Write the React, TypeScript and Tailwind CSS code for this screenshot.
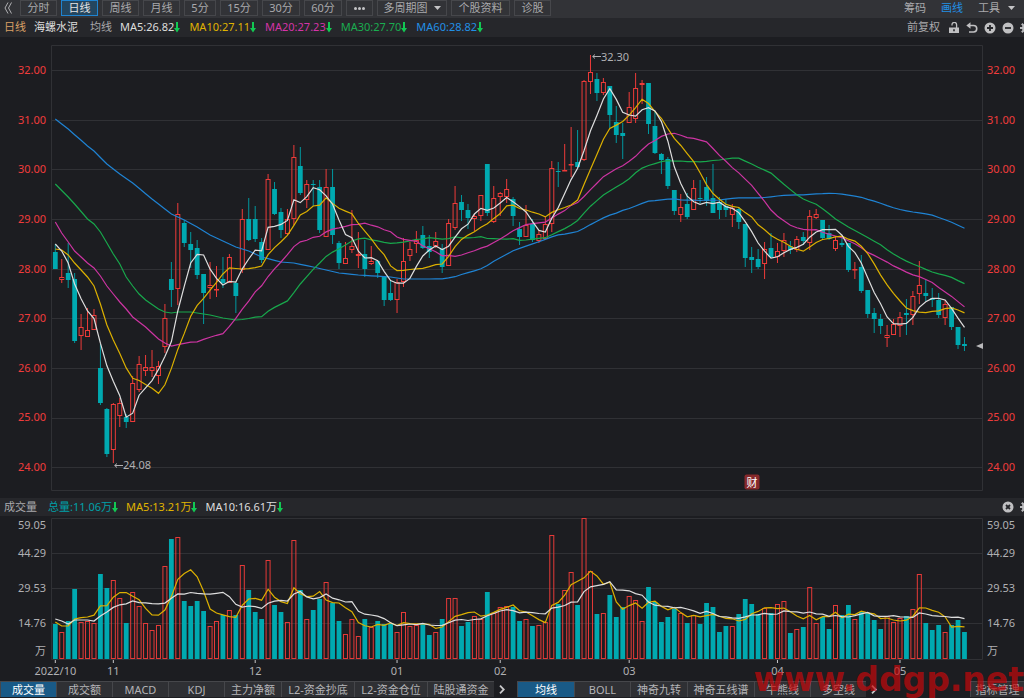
import { clsx } from 'clsx'

// [up, body top, body bottom, high, low, volume top], all in chart units
type Bar = [number, number, number, number, number, number]

const bars: Bar[] = [
  [0, 252, 269, 244, 269, 624], [1, 277, 280, 259, 283, 632], [0, 273, 280, 243, 288, 621],
  [0, 279, 341, 273, 343, 589], [1, 327, 336, 314, 350, 622], [1, 330, 337, 308, 337, 621],
  [1, 315, 330, 309, 330, 623], [0, 368, 403, 344, 405, 574], [0, 409, 454, 408, 457, 588],
  [1, 404, 450, 403, 463, 580], [1, 403, 416, 398, 427, 598], [0, 417, 422, 414, 428, 623],
  [1, 383, 422, 376, 422, 592], [1, 364, 390, 356, 392, 606], [1, 367, 371, 355, 376, 623],
  [1, 367, 371, 350, 377, 630], [1, 366, 376, 361, 384, 625], [1, 318, 347, 304, 353, 566],
  [0, 279, 290, 262, 307, 539], [1, 214, 289, 203, 305, 537], [0, 223, 243, 220, 247, 601],
  [0, 244, 250, 232, 268, 606], [0, 248, 275, 240, 279, 601], [0, 274, 293, 274, 324, 611],
  [1, 285, 288, 262, 299, 626], [1, 289, 290, 266, 297, 621], [0, 279, 283, 257, 288, 615],
  [1, 257, 283, 254, 283, 610], [0, 283, 296, 282, 313, 615], [1, 219, 270, 209, 273, 565],
  [0, 219, 240, 198, 241, 590], [0, 219, 239, 206, 242, 612], [0, 242, 260, 238, 263, 619],
  [1, 179, 250, 174, 250, 560], [0, 189, 214, 182, 215, 605], [0, 212, 230, 208, 238, 612],
  [1, 219, 234, 209, 235, 622], [1, 157, 219, 145, 225, 540], [0, 166, 193, 147, 195, 590],
  [1, 184, 200, 180, 208, 619], [0, 184, 185, 180, 206, 610], [0, 187, 230, 180, 233, 599],
  [1, 187, 237, 169, 237, 582], [0, 187, 235, 169, 244, 603], [0, 243, 263, 241, 269, 621],
  [1, 258, 264, 242, 264, 634], [1, 246, 250, 210, 253, 619], [1, 254, 256, 232, 268, 636],
  [0, 254, 269, 240, 277, 619], [1, 261, 264, 246, 265, 627], [0, 261, 273, 260, 278, 621],
  [0, 277, 300, 277, 306, 624], [0, 293, 300, 280, 301, 624], [1, 282, 300, 279, 313, 632],
  [1, 261, 282, 238, 287, 612], [1, 249, 256, 242, 261, 626], [1, 240, 244, 231, 253, 625],
  [0, 235, 248, 226, 249, 624], [0, 246, 252, 235, 258, 635], [1, 241, 246, 232, 248, 632],
  [0, 249, 267, 244, 273, 619], [1, 223, 266, 219, 266, 598], [1, 203, 228, 186, 230, 598],
  [0, 202, 210, 195, 221, 626], [0, 210, 218, 204, 229, 622], [1, 216, 219, 214, 231, 616],
  [1, 195, 216, 195, 221, 619], [0, 164, 213, 164, 216, 592], [1, 198, 222, 186, 223, 613],
  [1, 193, 197, 192, 216, 607], [1, 189, 197, 179, 203, 606], [0, 199, 216, 197, 226, 607],
  [0, 229, 237, 222, 245, 621], [1, 225, 237, 205, 237, 619], [0, 224, 240, 219, 242, 626],
  [1, 234, 241, 231, 243, 625], [1, 224, 239, 217, 239, 622], [1, 168, 224, 161, 232, 535],
  [0, 171, 172, 162, 187, 604], [1, 170, 171, 144, 171, 590], [1, 164, 165, 127, 177, 572],
  [0, 162, 167, 130, 168, 605], [1, 81, 160, 80, 161, 518], [1, 72, 82, 55, 94, 571],
  [0, 79, 93, 73, 101, 614], [1, 82, 93, 78, 95, 613], [0, 86, 115, 86, 128, 595],
  [0, 122, 135, 106, 143, 617], [0, 133, 136, 123, 159, 607], [1, 107, 123, 92, 123, 596],
  [1, 88, 119, 73, 123, 600], [1, 83, 85, 80, 104, 621], [0, 83, 124, 83, 134, 587],
  [0, 126, 153, 111, 154, 602], [0, 154, 160, 153, 174, 622], [0, 159, 186, 157, 189, 617],
  [0, 190, 211, 190, 215, 609], [1, 207, 215, 194, 222, 613], [0, 204, 217, 193, 219, 623],
  [1, 188, 210, 180, 210, 615], [0, 198, 199, 180, 203, 624], [0, 187, 201, 177, 206, 603],
  [0, 198, 213, 164, 213, 607], [0, 202, 210, 197, 219, 632], [0, 206, 210, 199, 217, 626],
  [1, 208, 215, 204, 227, 626], [0, 209, 222, 207, 229, 614], [0, 224, 258, 224, 267, 599],
  [0, 257, 260, 247, 273, 604], [0, 259, 267, 249, 269, 614], [1, 249, 264, 242, 279, 608],
  [0, 248, 257, 233, 258, 613], [1, 251, 257, 243, 263, 604], [1, 240, 251, 233, 257, 601],
  [0, 246, 250, 241, 254, 633], [1, 239, 250, 236, 252, 629], [0, 237, 241, 232, 245, 627],
  [1, 216, 243, 210, 250, 587], [1, 214, 218, 209, 219, 623], [0, 220, 238, 220, 239, 617],
  [0, 233, 239, 225, 240, 629], [1, 240, 249, 236, 251, 605], [0, 243, 245, 238, 247, 615],
  [0, 243, 270, 243, 272, 605], [1, 269, 270, 262, 279, 619], [0, 267, 291, 255, 293, 612],
  [0, 290, 314, 290, 318, 613], [0, 313, 319, 308, 333, 620], [0, 319, 326, 314, 334, 629],
  [1, 335, 338, 325, 347, 616], [1, 324, 335, 319, 335, 622], [1, 317, 326, 312, 337, 618],
  [0, 313, 315, 299, 335, 616], [1, 296, 315, 291, 325, 609], [1, 285, 294, 261, 304, 574],
  [0, 293, 296, 280, 301, 623], [0, 298, 300, 288, 307, 630], [0, 300, 315, 293, 318, 625],
  [1, 304, 318, 300, 325, 632], [0, 307, 327, 307, 330, 625], [0, 327, 345, 327, 349, 620],
  [0, 344, 346, 337, 351, 632],
]

const LEFT = 51
const WIDTH = 932
const PRICE_TOP = 37
const PRICE_HEIGHT = 461
const VOL_BASE = 659

const barX = (i: number) => 55.3 + i * 6.448
const percentX = (x: number) => `${((x - LEFT) / WIDTH) * 100}%`
const percentY = (y: number) => `${((y - PRICE_TOP) / PRICE_HEIGHT) * 100}%`

const closes = bars.map(([up, top, bottom]) => (up ? top : bottom))
const volumes = bars.map((b) => b[5])

// The window is not full at the start, so the first values come from seed points
function average(values: number[], size: number, seed: [number, number][]) {
  return values
    .map((_, i) => {
      let y: number
      if (i >= size - 1) {
        y = values.slice(i - size + 1, i + 1).reduce((a, b) => a + b, 0) / size
      } else {
        const k = seed.findIndex((s) => s[0] >= i)
        if (k < 0) return null
        const [x2, y2] = seed[k]
        const [x1, y1] = seed[Math.max(0, k - 1)]
        y = x2 === x1 ? y2 : y1 + ((y2 - y1) * (i - x1)) / (x2 - x1)
      }
      return `${barX(i).toFixed(1)},${y.toFixed(1)}`
    })
    .filter(Boolean)
    .join(' ')
}

const priceLines = [
  {
    color: '#1f83d3',
    points: average(closes, 60, [
      [0, 119], [2, 129], [5, 146], [6, 151], [8, 164], [10, 174], [12, 183], [15, 199], [17, 209],
      [18, 214], [19, 217], [20, 220], [22, 227], [24, 235], [26, 241], [28, 247], [30, 251],
      [32, 257], [35, 262], [37, 263], [40, 267], [42, 270], [44, 273], [47, 275], [52, 277],
      [54, 279], [59, 279],
    ]),
  },
  {
    color: '#18a84c',
    points: average(closes, 30, [
      [0, 184], [2, 197], [3, 204], [5, 219], [6, 224], [7, 232], [8, 243], [9, 254], [10, 264],
      [11, 277], [12, 286], [13, 294], [14, 300], [16, 309], [17, 312], [18, 313], [19, 312],
      [21, 312], [22, 313], [24, 315], [26, 318], [28, 320],
    ]),
  },
  {
    color: '#cc34a2',
    points: average(closes, 20, [
      [0, 222], [1, 233], [2, 242], [3, 251], [4, 257], [5, 263], [6, 268], [7, 276], [8, 286],
      [9, 294], [10, 302], [11, 309], [12, 317], [13, 322], [14, 327], [15, 333], [16, 339],
      [17, 343], [18, 346],
    ]),
  },
  {
    color: '#dcb000',
    points: average(closes, 10, [
      [0, 249], [1, 250], [2, 255], [3, 263], [4, 270], [5, 277], [6, 286], [7, 304], [8, 325],
    ]),
  },
  { color: '#dedede', points: average(closes, 5, [[0, 244], [1, 251], [2, 263], [3, 284]]) },
]

const volumeLines = [
  { color: '#dcb000', points: average(volumes, 5, [[0, 622], [1, 626], [2, 626], [3, 619]]) },
  {
    color: '#dedede',
    points: average(volumes, 10, [
      [0, 619], [1, 621], [2, 624], [3, 620], [5, 620], [6, 621], [7, 616], [8, 612],
    ]),
  },
]

const prices = ['32.00', '31.00', '30.00', '29.00', '28.00', '27.00', '26.00', '25.00', '24.00']

const months = [
  { at: 0, label: '2022/10' },
  { at: 9, label: '11' },
  { at: 31, label: '12' },
  { at: 53, label: '01' },
  { at: 69, label: '02' },
  { at: 89, label: '03' },
  { at: 112, label: '04' },
  { at: 131, label: '05' },
]

const periods = [
  { label: '分时', width: 'w-[37px]' },
  { label: '日线', width: 'w-[37px]', active: true },
  { label: '周线', width: 'w-[37px]' },
  { label: '月线', width: 'w-[37px]' },
  { label: '5分', width: 'w-8' },
  { label: '15分', width: 'w-[38px]' },
  { label: '30分', width: 'w-[38px]' },
  { label: '60分', width: 'w-[38px]' },
]

const averages = [
  { label: 'MA5:26.82', color: 'text-[#dedede]' },
  { label: 'MA10:27.11', color: 'text-[#e0b400]' },
  { label: 'MA20:27.23', color: 'text-[#d534a8]' },
  { label: 'MA30:27.70', color: 'text-[#1aad50]' },
  { label: 'MA60:28.82', color: 'text-[#2290e6]' },
]

const leftTabs = [
  { label: '成交量', width: 'w-14', active: true },
  { label: '成交额', width: 'w-14' },
  { label: 'MACD', width: 'w-14' },
  { label: 'KDJ', width: 'w-14' },
  { label: '主力净额', width: 'w-[57px]' },
  { label: 'L2-资金抄底', width: 'w-[73px]' },
  { label: 'L2-资金仓位', width: 'w-[73px]' },
  { label: '陆股通资金', width: 'w-[67px]' },
]

const rightTabs = [
  { label: '均线', width: 'w-[57px]', active: true },
  { label: 'BOLL', width: 'w-14' },
  { label: '神奇九转', width: 'w-[57px]' },
  { label: '神奇五线谱', width: 'w-[67px]' },
  { label: '牛熊线', width: 'w-14' },
  { label: '多空线', width: 'w-14' },
]

function Down() {
  return (
    <svg className="h-[11px] w-1.5 shrink-0" viewBox="0 0 6 11" fill="#12c853">
      <path d="M2 0h2v6h2L3 10.5 0 6h2z" />
    </svg>
  )
}

function Caret() {
  return (
    <svg className="h-1 w-[7px] shrink-0" viewBox="0 0 7 4" fill="#c4c4c6">
      <path d="M0 0h7L3.500 4z" />
    </svg>
  )
}

function Gear() {
  return (
    <svg className="h-3 w-3 shrink-0" viewBox="0 0 12 12" fill="none" stroke="#b9b9bc">
      <circle cx="6" cy="6" r="3" strokeWidth="2.200" />
      <path d="M6 0v3M6 9v3M0 6h3M9 6h3M1.800 1.800l2 2M8.200 8.200l2 2M10.200 1.800l-2 2M3.800 8.200l-2 2" strokeWidth="2" />
    </svg>
  )
}

function Round({ path }: { path: string }) {
  return (
    <svg className="h-3 w-3" viewBox="0 0 12 12">
      <circle cx="6" cy="6" r="5.500" fill="#c0c0c2" />
      <path d={path} stroke="#26272b" strokeWidth="1.800" />
    </svg>
  )
}

function Chevron() {
  return (
    <svg className="h-[9px] w-1.5" viewBox="0 0 6 9" fill="none" stroke="#c8c8ca" strokeWidth="1.800">
      <path d="M1 .7l3.800 3.800L1 8.300" />
    </svg>
  )
}

function ToolButton({ label, width, active }: { label: string; width: string; active?: boolean }) {
  return (
    <button
      className={clsx(
        'h-4 shrink-0 border leading-3',
        width,
        active ? 'border-[#1f83d0] bg-[#24465f] text-[#e4e4e6]' : 'border-[#46474b] text-[#a9a9ac]',
      )}
    >
      {label}
    </button>
  )
}

function Tab({ label, width, active }: { label: string; width: string; active?: boolean }) {
  return (
    <button
      className={clsx(
        'h-4 shrink-0 whitespace-nowrap border-l border-t border-[#46474b] leading-3',
        width,
        active ? 'bg-[#195a87] text-white' : 'bg-[#2f3034] text-[#b4b4b7]',
      )}
    >
      {label}
    </button>
  )
}

function PriceAxis({ className }: { className: string }) {
  return (
    <div
      className={clsx('flex flex-col justify-between pb-[23px] pt-[25px] leading-4 text-[#f03c3c]', className)}
    >
      {prices.map((p) => (
        <span key={p}>{p}</span>
      ))}
    </div>
  )
}

function VolumeAxis({ className }: { className: string }) {
  return (
    <div className={clsx('flex flex-col pt-px leading-4 text-[#b0b0b3]', className)}>
      <span>59.05</span>
      <span className="mt-3">44.29</span>
      <span className="mt-[19px]">29.53</span>
      <span className="mt-[19px]">14.76</span>
      <span className="mt-3">万</span>
    </div>
  )
}

function Mark({ x, y, label }: { x: number; y: number; label: string }) {
  return (
    <div
      className="absolute flex -translate-y-1/2 items-center leading-4 text-[#b0b0b3]"
      style={{ left: percentX(x), top: percentY(y) }}
    >
      <svg className="h-[5px] w-[9px]" viewBox="0 0 9 5" fill="none" stroke="#b0b0b3">
        <path d="M9 2.500H.7M3 .5L.7 2.500 3 4.500" />
      </svg>
      {label}
    </div>
  )
}

function PriceChart() {
  return (
    <svg
      className="h-0 min-h-full w-full"
      viewBox="51 37 932 461"
      preserveAspectRatio="none"
      fill="none"
    >
      <g stroke="#303135">
        <path d="M51.500 45.500H982.500V490.500H51.500z" />
        {prices.map((p, i) => (
          <path key={p} d={`M51 ${Math.round(70 + i * 49.65) + 0.5}H983`} />
        ))}
      </g>
      {bars.map(([up, top, bottom, high, low], i) => {
        const x = barX(i)
        return up ? (
          <g key={i} stroke="#ee3b39">
            <path d={`M${x} ${high}V${top}M${x} ${bottom}V${low}`} />
            <rect x={x - 2} y={top + 0.5} width="4" height={Math.max(0.5, bottom - top - 1)} />
          </g>
        ) : (
          <g key={i} stroke="#00989f">
            <path d={`M${x} ${high}V${low}`} />
            <rect x={x - 2.4} y={top} width="4.800" height={bottom - top} fill="#00a9b0" stroke="none" />
          </g>
        )
      })}
      {priceLines.map((l) => (
        <polyline key={l.color} points={l.points} stroke={l.color} strokeWidth="1.200" />
      ))}
      <path d="M976 346l7-3v6z" fill="#b9b9bb" />
    </svg>
  )
}

function VolumeChart() {
  return (
    <svg className="h-[148px] w-full" viewBox="51 516 932 148" preserveAspectRatio="none" fill="none">
      <path
        d="M51.500 518.500H982.500V659.500H51.500zM51 553.500H983M51 588.500H983M51 623.500H983"
        stroke="#303135"
      />
      {bars.map(([up, , , , , top], i) => {
        const x = barX(i)
        return up ? (
          <rect
            key={i}
            x={x - 2}
            y={top + 0.5}
            width="4"
            height={VOL_BASE - top - 1}
            stroke="#e63a38"
          />
        ) : (
          <rect key={i} x={x - 2.4} y={top} width="4.800" height={VOL_BASE - top} fill="#00a9b0" />
        )
      })}
      {volumeLines.map((l) => (
        <polyline key={l.color} points={l.points} stroke={l.color} strokeWidth="1.200" />
      ))}
      {months.map((m) => (
        <path key={m.label} d={`M${barX(m.at)} 660v3`} stroke="#c8c8ca" />
      ))}
    </svg>
  )
}

export default function App() {
  return (
    <div className="relative flex min-h-screen flex-col overflow-hidden bg-[#1c1d21] font-['Noto_Sans','Noto_Sans_CJK_SC',sans-serif] text-[11px] text-[#a9a9ac]">
      {/* Toolbar */}
      <header className="flex h-[18px] items-start gap-1 bg-[#323337]">
        <button aria-label="收起" className="flex h-4 w-4 items-center pl-1">
          <svg className="h-3 w-2" viewBox="0 0 8 12" fill="none" stroke="#b0b0b3">
            <path d="M4 .5L1 6l3 5.500M7.500 .5l-3 5.500 3 5.500" />
          </svg>
        </button>
        {periods.map((p) => (
          <ToolButton key={p.label} {...p} />
        ))}
        <button
          aria-label="更多"
          className="flex h-4 w-[27px] shrink-0 items-center justify-center gap-px border border-[#46474b]"
        >
          <i className="h-[3px] w-[3px] rounded-xs bg-[#c4c4c6]" />
          <i className="h-[3px] w-[3px] rounded-xs bg-[#c4c4c6]" />
          <i className="h-[3px] w-[3px] rounded-xs bg-[#c4c4c6]" />
        </button>
        <button className="flex h-4 w-[70px] shrink-0 items-center justify-center gap-1.5 border border-[#46474b] leading-3">
          多周期图
          <Caret />
        </button>
        <ToolButton label="个股资料" width="w-[59px]" />
        <ToolButton label="诊股" width="w-[37px]" />
        <div className="ml-auto flex h-4 items-center gap-[15px] pr-[9px]">
          <button>筹码</button>
          <button className="text-[#2290e6]">画线</button>
          <button className="flex items-center gap-2">
            工具
            <Caret />
          </button>
        </div>
      </header>

      {/* Averages */}
      <div className="flex h-[19px] items-center bg-[#26272b] pl-1">
        <span className="text-[#d9a066]">日线</span>
        <span className="ml-2 text-[#dedede]">海螺水泥</span>
        <span className="ml-3">均线</span>
        <div className="ml-2 flex gap-[9px]">
          {averages.map((a) => (
            <span key={a.label} className={clsx('flex items-center', a.color)}>
              {a.label}
              <Down />
            </span>
          ))}
        </div>
        <div className="-mr-2 ml-auto flex items-center gap-1.5">
          <button className="mr-0.5">前复权</button>
          <button aria-label="解锁">
            <svg className="h-3 w-3" viewBox="0 0 12 12" fill="none">
              <path d="M1 5.500h10V11H1z" fill="#c0c0c2" />
              <path d="M4 3.500V2.700a2.300 2.300 0 0 1 4.600 0V6" stroke="#c0c0c2" strokeWidth="1.300" />
              <path d="M6 7.200v2" stroke="#26272b" strokeWidth="1.600" />
            </svg>
          </button>
          <button aria-label="撤销">
            <svg className="h-3 w-3" viewBox="0 0 12 12" fill="none">
              <path d="M3 3.500h4.500a3.200 3.200 0 0 1 0 6.500H3" stroke="#c0c0c2" strokeWidth="1.600" />
              <path d="M.3 3.500L4.500 .3v6.400z" fill="#c0c0c2" />
            </svg>
          </button>
          <button aria-label="放大">
            <Round path="M6 3v6M3 6h6" />
          </button>
          <button aria-label="缩小">
            <Round path="M3 6h6" />
          </button>
          <button aria-label="设置">
            <Gear />
          </button>
        </div>
      </div>

      {/* Price */}
      <section className="grid min-h-[461px] flex-1 grid-cols-[51px_1fr_41px]">
        <PriceAxis className="pr-[5px] text-right" />
        <div className="relative grid">
          <PriceChart />
          <Mark x={592} y={57} label="32.30" />
          <Mark x={114} y={465} label="24.08" />
          <button
            className="absolute h-[15px] w-[15px] -translate-x-1/2 -translate-y-1/2 rounded-xs bg-[#86292b] leading-[15px] text-white"
            style={{ left: percentX(752), top: percentY(482) }}
          >
            财
          </button>
        </div>
        <PriceAxis className="pl-1" />
      </section>

      {/* Volume */}
      <div className="flex h-[18px] items-center bg-[#26272b] pl-1">
        <span>成交量</span>
        <span className="ml-[11px] flex items-center text-[#00a0a8]">
          总量:11.06万
          <Down />
        </span>
        <span className="ml-2 flex items-center text-[#e0b400]">
          MA5:13.21万
          <Down />
        </span>
        <span className="ml-2 flex items-center text-[#dedede]">
          MA10:16.61万
          <Down />
        </span>
        <div className="-mr-2 ml-auto flex items-center gap-1.5">
          <button aria-label="关闭">
            <Round path="M4 4l4 4M8 4l-4 4" />
          </button>
          <button aria-label="设置">
            <Gear />
          </button>
        </div>
      </div>
      <section className="grid grid-cols-[51px_1fr_41px]">
        <VolumeAxis className="pr-[5px] text-right" />
        <div>
          <VolumeChart />
          <div className="relative h-[17px] text-[#b0b0b3]">
            {months.map((m) => (
              <span
                key={m.label}
                className="absolute -translate-x-1/2 leading-[14px]"
                style={{ left: percentX(barX(m.at)) }}
              >
                {m.label}
              </span>
            ))}
          </div>
        </div>
        <VolumeAxis className="pl-1" />
      </section>

      {/* Indicator tabs */}
      <nav className="flex h-[17px] items-start">
        {leftTabs.map((t) => (
          <Tab key={t.label} {...t} />
        ))}
        <button aria-label="更多指标" className="flex h-4 w-[23px] shrink-0 items-center pl-[5px]">
          <Chevron />
        </button>
        {rightTabs.map((t) => (
          <Tab key={t.label} {...t} />
        ))}
        <button aria-label="更多主图指标" className="flex h-4 w-4 shrink-0 items-center pl-[5px]">
          <Chevron />
        </button>
        <button className="ml-auto h-4 w-[54px] shrink-0 whitespace-nowrap border-l border-t border-[#46474b] bg-[#2f3034] leading-3">
          指标管理
        </button>
      </nav>

      <a
        href="#"
        className="absolute -bottom-0.5 right-0 font-['DejaVu_Sans',sans-serif] text-[33px] font-bold leading-10 text-[#c8080a]/70"
      >
        www.ddgp.net
      </a>
    </div>
  )
}
